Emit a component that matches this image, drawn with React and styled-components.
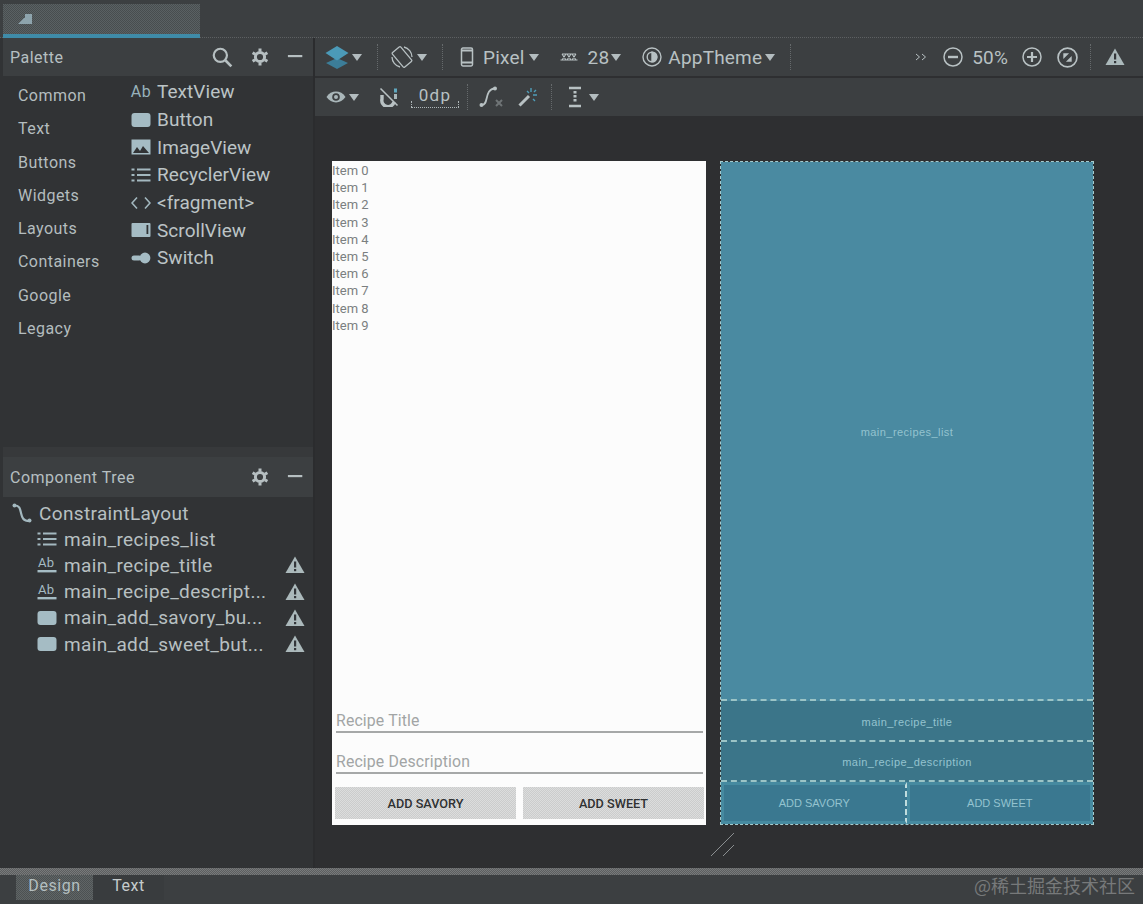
import React from "react";
import styled, { createGlobalStyle, css } from "styled-components";

const GlobalStyle = createGlobalStyle`
  html, body {
    margin: 0;
    height: 100%;
    background: #2e2f31;
    font-family: Roboto, "Noto Sans CJK SC", sans-serif;
    overflow: hidden;
  }
  * { box-sizing: border-box; }
`;

const dither = (a, b) => css`
  background: repeating-conic-gradient(${a} 0 25%, ${b} 0 50%) 0 0 / 2px 2px;
`;

const Ide = styled.div`
  position: relative;
  width: 1143px;
  height: 904px;
  display: flex;
  flex-direction: column;
  background: #2e2f31;
  color: #bcc4c6;
`;

const TabStrip = styled.div`
  height: 38px;
  flex: none;
  padding: 4px 0 0 3px;
  background: #3c3f41;
  border-bottom: 1px dotted #5d6062;
`;

const FileTab = styled.div`
  width: 197px;
  height: 34px;
  padding: 7px 0 0 14px;
  ${dither("#484d4f", "#5a6163")}
  border-bottom: 4px solid #3f8ba8;
`;

const Main = styled.div`
  flex: 1;
  min-height: 0;
  display: flex;
`;

const Sidebar = styled.div`
  width: 315px;
  flex: none;
  padding-left: 3px;
  display: flex;
  flex-direction: column;
  background: #313335;
  border-right: 2px solid #2b2c2e;
`;

const PanelHeader = styled.div`
  height: ${(p) => p.$height}px;
  flex: none;
  display: flex;
  align-items: center;
  padding: 0 8px 0 7px;
  background: #3c3f41;
  font-size: 16px;
  letter-spacing: 0.5px;
  color: #b6bfc1;
`;

const PanelTitle = styled.div`
  flex: 1;
`;

const HeaderIcons = styled.div`
  display: flex;
  align-items: center;
  gap: 17px;
`;

const PaletteBody = styled.div`
  height: 371px;
  flex: none;
  display: flex;
  padding: 3px 0 0 15px;
`;

const Categories = styled.div`
  width: 113px;
  flex: none;
`;

const Category = styled.div`
  height: 33.3px;
  line-height: 33px;
  font-size: 16px;
  letter-spacing: 0.45px;
  color: #b4bdbf;
`;

const Widgets = styled.div`
  display: flex;
  flex-direction: column;
  margin-top: -1px;
`;

const WidgetRow = styled.div`
  height: 27.7px;
  display: flex;
  align-items: center;
  gap: 6px;
  font-size: 19px;
  letter-spacing: 0.05px;
  color: #bcc4c6;
`;

const IconSlot = styled.span`
  width: 20px;
  height: 20px;
  flex: none;
  display: flex;
  align-items: center;
  justify-content: center;
  color: #a3b8bf;
`;

const AbMark = styled.span`
  font-size: 16px;
  line-height: 1;
  letter-spacing: 0.6px;
  color: #98b2bb;
`;

const PanelGap = styled.div`
  height: 10px;
  flex: none;
  background: #37393b;
`;

const TreeBody = styled.div`
  flex: 1;
  padding: 3px 8px 0 9px;
`;

const TreeRow = styled.div`
  height: 26.2px;
  display: flex;
  align-items: center;
  gap: 7px;
  padding-left: ${(p) => (p.$root ? 0 : 25)}px;
  font-size: 19px;
  letter-spacing: 0.35px;
  color: #b8c0c2;
`;

const TreeLabel = styled.span`
  flex: 1;
  white-space: nowrap;
`;

const Workspace = styled.div`
  flex: 1;
  min-width: 0;
  display: flex;
  flex-direction: column;
`;

const ToolRow = styled.div`
  height: 38px;
  flex: none;
  display: flex;
  align-items: center;
  background: #3c3f41;
  margin-bottom: ${(p) => p.$gap || 0}px;
  font-size: 19px;
  letter-spacing: 0.2px;
  color: #b8c1c3;
`;

const Tool = styled.div`
  display: flex;
  align-items: center;
  gap: ${(p) => p.$gap ?? 3}px;
  margin-left: ${(p) => p.$ml || 0}px;
  margin-right: ${(p) => p.$mr || 0}px;
`;

const Separator = styled.div`
  width: 0;
  height: 26px;
  margin-left: ${(p) => p.$ml || 0}px;
  border-left: 1px dotted #666a6c;
`;

const Spacer = styled.div`
  flex: 1;
`;

const Caret = styled.span`
  width: 0;
  height: 0;
  flex: none;
  border-left: 5.5px solid transparent;
  border-right: 5.5px solid transparent;
  border-top: 7px solid #b3bcbf;
`;

const ZeroDp = styled.div`
  position: relative;
  width: 48px;
  height: 22px;
  margin: 0 0 0 12px;
  text-align: center;
  font-size: 17px;
  line-height: 18px;
  letter-spacing: 1.2px;
  border-bottom: 1px dotted #aeb6b8;

  &::before,
  &::after {
    content: "";
    position: absolute;
    bottom: 0;
    height: 6px;
    border-left: 1px dotted #aeb6b8;
  }
  &::before { left: 0; }
  &::after { right: 0; }
`;

const Canvas = styled.div`
  flex: 1;
  min-height: 0;
  display: flex;
  gap: 14px;
  padding: 45px 0 0 17px;
  background: #2e2f31;
`;

const Phone = styled.div`
  width: 374px;
  height: 664px;
  flex: none;
  display: flex;
  flex-direction: column;
  background: #fcfcfc;
`;

const ItemList = styled.div`
  flex: 1;
  padding-top: 1px;
`;

const ListItem = styled.div`
  height: 17.2px;
  line-height: 18px;
  font-size: 13px;
  color: #7b7f80;
`;

const EditField = styled.div`
  height: 41px;
  margin: 0 3px 0 4px;
  display: flex;
  align-items: flex-end;
  border-bottom: 2px solid #a6a8a8;
  font-size: 15.8px;
  line-height: 20px;
  letter-spacing: 0.15px;
  color: #a2a5a5;
`;

const PhoneActions = styled.div`
  height: 51px;
  flex: none;
  display: flex;
  gap: 7px;
  padding: 13px 2px 6px 3px;
`;

const PhoneButton = styled.div`
  flex: 1;
  display: flex;
  align-items: center;
  justify-content: center;
  ${dither("#cbcccc", "#dcdddd")}
  font-size: 12.7px;
  font-weight: 500;
  color: #2f3132;
`;

const Blueprint = styled.div`
  position: relative;
  width: 374px;
  height: 664px;
  flex: none;
  display: flex;
  flex-direction: column;
  border: 1px dashed #a5ccce;
  font-family: "Liberation Sans", sans-serif;
  font-size: 11px;
  letter-spacing: 0.45px;
  color: #94c3cf;
`;

const BlueBlock = styled.div`
  height: ${(p) => (p.$height ? `${p.$height}px` : "auto")};
  flex: ${(p) => (p.$height ? "none" : 1)};
  display: flex;
  align-items: center;
  justify-content: center;
  padding-top: 2px;
  background: ${(p) => p.$bg};
  border-bottom: ${(p) => (p.$line ? "2px dashed #9cc4c6" : "none")};
`;

const BlueActions = styled.div`
  height: 42px;
  flex: none;
  display: flex;
`;

const BlueButton = styled.div`
  flex: 1;
  display: flex;
  align-items: center;
  justify-content: center;
  background: #3a7890;
  border: 3px solid #468aa0;
  border-right: ${(p) => (p.$first ? "2px dashed #c0dcdd" : "3px solid #468aa0")};
  letter-spacing: 0;
`;

const ResizeMark = styled.svg`
  position: absolute;
  left: -11px;
  top: 670px;
`;

const BottomBar = styled.div`
  height: 36px;
  flex: none;
  background: #3c3f41;
  display: flex;
  flex-direction: column;
  font-size: 16px;
  letter-spacing: 0.55px;
`;

const BottomRule = styled.div`
  height: 7px;
  flex: none;
  ${dither("#5c5e5f", "#787a7b")}
`;

const BottomTabs = styled.div`
  display: flex;
  padding-left: 16px;
`;

const BottomTab = styled.div`
  width: ${(p) => p.$width}px;
  height: 25px;
  display: flex;
  align-items: center;
  justify-content: center;
  padding-bottom: 5px;
  color: ${(p) => (p.$active ? "#b4bfc0" : "#c6cccd")};
  ${(p) => (p.$active ? dither("#4c5152", "#606566") : "background: #393c3e;")}
`;

const Watermark = styled.div`
  position: absolute;
  right: 8px;
  bottom: 7px;
  font-size: 18px;
  line-height: 24px;
  color: #77797a;
  font-family: "Noto Sans CJK SC", sans-serif;
`;

const Svg = ({ size = 20, children, ...rest }) => (
  <svg width={size} height={size} viewBox="0 0 20 20" fill="none" stroke="currentColor" strokeWidth="1.6" {...rest}>
    {children}
  </svg>
);

const FileIcon = () => (
  <Svg size={16} stroke="none" viewBox="0 0 16 16">
    <path d="M1 13l6-6h1V3h7v10z" fill="#8ea4ad" />
  </Svg>
);

const SearchIcon = () => (
  <Svg size={22}>
    <circle cx="8.5" cy="8.5" r="6" strokeWidth="2" />
    <path d="M13 13l5.5 5.5" strokeWidth="2.4" />
  </Svg>
);

const GearIcon = () => (
  <Svg size={20}>
    <circle cx="10" cy="10" r="4.6" strokeWidth="3" />
    <path d="M10 1.5v3M10 15.5v3M2.6 5.7l2.6 1.5M14.8 12.8l2.6 1.5M2.6 14.3l2.6-1.5M14.8 7.2l2.6-1.5" strokeWidth="3" />
  </Svg>
);

const MinusIcon = () => (
  <Svg size={18}>
    <path d="M1 9h16" strokeWidth="2.4" />
  </Svg>
);

const ButtonIcon = () => (
  <Svg size={20}>
    <rect x="0.5" y="3" width="19" height="14" rx="3" fill="#a5bcc4" stroke="none" />
  </Svg>
);

const ImageIcon = () => (
  <Svg size={20}>
    <rect x="0.5" y="2.5" width="19" height="15" fill="#a5bcc4" stroke="none" />
    <path d="M2 16l4-6 3 4 3-5 6 7z" fill="#313335" stroke="none" />
  </Svg>
);

const ListIcon = () => (
  <Svg size={20}>
    <path d="M0.5 4.5h3M0.5 10h3M0.5 15.5h3M6 4.5h13.5M6 10h13.5M6 15.5h13.5" strokeWidth="2.2" />
  </Svg>
);

const CodeIcon = () => (
  <Svg size={20}>
    <path d="M6 4.5L1 10l5 5.5M14 4.5l5 5.5-5 5.5" />
  </Svg>
);

const ScrollIcon = () => (
  <Svg size={20}>
    <rect x="0.5" y="3" width="19" height="14" rx="1" fill="#a5bcc4" stroke="none" />
    <rect x="15.5" y="5" width="1.8" height="9" fill="#313335" stroke="none" />
  </Svg>
);

const SwitchIcon = () => (
  <Svg size={20}>
    <rect x="0.5" y="7.5" width="10" height="5" rx="2.5" fill="#a5bcc4" stroke="none" />
    <circle cx="14" cy="10" r="5.4" fill="#a5bcc4" stroke="none" />
  </Svg>
);

const ConstraintIcon = () => (
  <Svg size={20}>
    <circle cx="2.5" cy="2.5" r="2" fill="currentColor" stroke="none" />
    <circle cx="17.5" cy="17.5" r="2" fill="currentColor" stroke="none" />
    <path d="M2.5 2.5c5 0 5.5 3 6.5 7.5s2 8 8.5 8" strokeWidth="2.2" />
  </Svg>
);

const TextUnderlineIcon = () => (
  <Svg size={20} stroke="none">
    <text x="1" y="12" fontSize="13" fill="#a5bcc4" stroke="none" fontFamily="Roboto, sans-serif">Ab</text>
    <rect x="0.5" y="15" width="19" height="2.4" fill="#a5bcc4" />
  </Svg>
);

const WarningIcon = () => (
  <Svg size={20} stroke="none">
    <path d="M10 1.5L19.5 18H0.5z" fill="#abb9bb" />
    <rect x="9" y="6.5" width="2.2" height="6" fill="#33363a" />
    <rect x="9" y="14" width="2.2" height="2.2" fill="#33363a" />
  </Svg>
);

const LayersIcon = () => (
  <Svg size={24} stroke="none" viewBox="0 0 24 24">
    <path d="M12 13L1 18l11 6 11-6z" fill="#3c7d98" />
    <path d="M12 1L0.5 8 12 15.5 23.5 8z" fill="#4b9ab8" />
  </Svg>
);

const RotateIcon = () => (
  <Svg size={24} viewBox="0 0 24 24" strokeWidth="1.3">
    <rect x="6.5" y="2.5" width="11" height="19" rx="1.2" transform="rotate(-40 12 12)" />
    <path d="M2 12a10.5 10.5 0 0 0 8 10M22 12a10.5 10.5 0 0 0-8-10" />
  </Svg>
);

const PhoneIcon = () => (
  <Svg size={20} strokeWidth="1.5">
    <rect x="4.5" y="1" width="11" height="18" rx="1.4" />
    <path d="M4.5 3.5h11M4.5 15.5h11" strokeWidth="2" />
  </Svg>
);

const ApiIcon = () => (
  <Svg size={20} strokeWidth="1.1">
    <path d="M3 7h14M1.5 13h17M3 7l4 6M7 7l-4 6M8 7l4 6M12 7l-4 6M13 7l4 6M17 7l-4 6" />
  </Svg>
);

const ThemeIcon = () => (
  <Svg size={20} strokeWidth="1.4">
    <circle cx="10" cy="10" r="9" />
    <circle cx="10" cy="10" r="4.8" />
    <path d="M10 5.2a4.8 4.8 0 0 1 0 9.6z" fill="currentColor" />
  </Svg>
);

const ChevronsIcon = () => (
  <Svg size={12} viewBox="0 0 12 12" strokeWidth="1">
    <path d="M1 3l3.5 3L1 9M7 3l3.5 3L7 9" />
  </Svg>
);

const ZoomOutIcon = () => (
  <Svg size={20} strokeWidth="1.5">
    <circle cx="10" cy="10" r="9" />
    <path d="M5 10h10" strokeWidth="2.4" />
  </Svg>
);

const ZoomInIcon = () => (
  <Svg size={20} strokeWidth="1.5">
    <circle cx="10" cy="10" r="9" />
    <path d="M5 10h10M10 5v10" strokeWidth="2.2" />
  </Svg>
);

const FitIcon = () => (
  <Svg size={21} strokeWidth="1.6">
    <circle cx="10" cy="10" r="9" />
    <path d="M6 6h5.5L6 11.5zM14 14H8.5L14 8.5z" fill="currentColor" stroke="none" />
  </Svg>
);

const EyeIcon = () => (
  <Svg size={20} strokeWidth="1.8">
    <path d="M0.5 10C5 2.8 15 2.8 19.5 10 15 17.2 5 17.2 0.5 10z" fill="#a9b6b9" stroke="none" />
    <circle cx="10" cy="10" r="3.8" fill="#3c3f41" stroke="none" />
    <circle cx="10" cy="10" r="2" fill="#a9b6b9" stroke="none" />
  </Svg>
);

const MagnetIcon = () => (
  <Svg size={20} strokeWidth="2">
    <path d="M3 8v4a6 6 0 0 0 12 3" strokeWidth="3.4" />
    <path d="M1.5 1.5l17 17" strokeWidth="1.6" />
    <rect x="15" y="1.5" width="3" height="4" fill="#5fa8bf" stroke="none" />
    <rect x="15" y="7" width="3" height="5" fill="#a9b6b9" stroke="none" />
  </Svg>
);

const PathIcon = () => (
  <Svg size={24} viewBox="0 0 24 24" strokeWidth="1.8">
    <circle cx="2.5" cy="20" r="2" fill="currentColor" stroke="none" />
    <circle cx="16" cy="3.5" r="2" fill="currentColor" stroke="none" />
    <path d="M3 20c7 0 2-16 13-16.5" />
    <path d="M17 15l6 6M23 15l-6 6" stroke="#6f7476" strokeWidth="2" />
  </Svg>
);

const WandIcon = () => (
  <Svg size={20} strokeWidth="3">
    <path d="M1.5 18.5L11 9" />
    <path d="M13 1v4M9 4l2 2M16 5l2-2M15 8h4M15 12l2 2" stroke="#4f9db8" strokeWidth="1.4" />
  </Svg>
);

const MarginIcon = () => (
  <Svg width={12} height={22} viewBox="0 0 12 22" strokeWidth="2.4">
    <path d="M0 2h12M0 20h12" />
    <path d="M6 5v12" strokeDasharray="2.5 1.5" strokeWidth="3" />
  </Svg>
);

const paletteCategories = ["Common", "Text", "Buttons", "Widgets", "Layouts", "Containers", "Google", "Legacy"];

const paletteWidgets = [
  { label: "TextView", icon: <AbMark>Ab</AbMark> },
  { label: "Button", icon: <ButtonIcon /> },
  { label: "ImageView", icon: <ImageIcon /> },
  { label: "RecyclerView", icon: <ListIcon /> },
  { label: "<fragment>", icon: <CodeIcon /> },
  { label: "ScrollView", icon: <ScrollIcon /> },
  { label: "Switch", icon: <SwitchIcon /> },
];

const treeRows = [
  { label: "main_recipes_list", icon: <ListIcon /> },
  { label: "main_recipe_title", icon: <TextUnderlineIcon />, warn: true },
  { label: "main_recipe_descript...", icon: <TextUnderlineIcon />, warn: true },
  { label: "main_add_savory_bu...", icon: <ButtonIcon />, warn: true },
  { label: "main_add_sweet_but...", icon: <ButtonIcon />, warn: true },
];

const items = Array.from({ length: 10 }, (_, i) => `Item ${i}`);

export default function App() {
  return (
    <Ide>
      <GlobalStyle />
      <TabStrip>
        <FileTab>
          <FileIcon />
        </FileTab>
      </TabStrip>
      <Main>
        <Sidebar>
          <PanelHeader $height={38}>
            <PanelTitle>Palette</PanelTitle>
            <HeaderIcons>
              <SearchIcon />
              <GearIcon />
              <MinusIcon />
            </HeaderIcons>
          </PanelHeader>
          <PaletteBody>
            <Categories>
              {paletteCategories.map((name) => (
                <Category key={name}>{name}</Category>
              ))}
            </Categories>
            <Widgets>
              {paletteWidgets.map((w) => (
                <WidgetRow key={w.label}>
                  <IconSlot>{w.icon}</IconSlot>
                  {w.label}
                </WidgetRow>
              ))}
            </Widgets>
          </PaletteBody>
          <PanelGap />
          <PanelHeader $height={40}>
            <PanelTitle>Component Tree</PanelTitle>
            <HeaderIcons>
              <GearIcon />
              <MinusIcon />
            </HeaderIcons>
          </PanelHeader>
          <TreeBody>
            <TreeRow $root>
              <IconSlot>
                <ConstraintIcon />
              </IconSlot>
              <TreeLabel>ConstraintLayout</TreeLabel>
            </TreeRow>
            {treeRows.map((row) => (
              <TreeRow key={row.label}>
                <IconSlot>{row.icon}</IconSlot>
                <TreeLabel>{row.label}</TreeLabel>
                {row.warn && <WarningIcon />}
              </TreeRow>
            ))}
          </TreeBody>
        </Sidebar>
        <Workspace>
          <ToolRow $gap={2}>
            <Tool $ml={10}>
              <LayersIcon />
              <Caret />
            </Tool>
            <Separator $ml={15} />
            <Tool $ml={12}>
              <RotateIcon />
              <Caret />
            </Tool>
            <Separator $ml={15} />
            <Tool $ml={14} $gap={6}>
              <PhoneIcon />
              <Tool $gap={4}>
                Pixel
                <Caret />
              </Tool>
            </Tool>
            <Tool $ml={20} $gap={9}>
              <ApiIcon />
              <Tool $gap={2}>
                28
                <Caret />
              </Tool>
            </Tool>
            <Tool $ml={21} $gap={6}>
              <ThemeIcon />
              <Tool $gap={3}>
                AppTheme
                <Caret />
              </Tool>
            </Tool>
            <Separator $ml={15} />
            <Spacer />
            <Tool>
              <ChevronsIcon />
            </Tool>
            <Tool $ml={16}>
              <ZoomOutIcon />
            </Tool>
            <Tool $ml={9}>50%</Tool>
            <Tool $ml={14}>
              <ZoomInIcon />
            </Tool>
            <Tool $ml={15}>
              <FitIcon />
            </Tool>
            <Separator $ml={12} />
            <Tool $ml={14} $mr={18}>
              <WarningIcon />
            </Tool>
          </ToolRow>
          <ToolRow>
            <Tool $ml={11}>
              <EyeIcon />
              <Caret />
            </Tool>
            <Tool $ml={20}>
              <MagnetIcon />
            </Tool>
            <ZeroDp>0dp</ZeroDp>
            <Separator $ml={8} />
            <Tool $ml={11}>
              <PathIcon />
            </Tool>
            <Tool $ml={15}>
              <WandIcon />
            </Tool>
            <Separator $ml={13} />
            <Tool $ml={17} $gap={8}>
              <MarginIcon />
              <Caret />
            </Tool>
          </ToolRow>
          <Canvas>
            <Phone>
              <ItemList>
                {items.map((item) => (
                  <ListItem key={item}>{item}</ListItem>
                ))}
              </ItemList>
              <EditField>Recipe Title</EditField>
              <EditField>Recipe Description</EditField>
              <PhoneActions>
                <PhoneButton>ADD SAVORY</PhoneButton>
                <PhoneButton>ADD SWEET</PhoneButton>
              </PhoneActions>
            </Phone>
            <Blueprint>
              <BlueBlock $bg="#4a8aa1" $line>main_recipes_list</BlueBlock>
              <BlueBlock $bg="#3b7589" $height={41} $line>main_recipe_title</BlueBlock>
              <BlueBlock $bg="#3b7589" $height={40} $line>main_recipe_description</BlueBlock>
              <BlueActions>
                <BlueButton $first>ADD SAVORY</BlueButton>
                <BlueButton>ADD SWEET</BlueButton>
              </BlueActions>
              <ResizeMark width="26" height="26" viewBox="0 0 26 26" fill="none" stroke="#8a8e90" strokeWidth="1">
                <path d="M1 24L24 1M13 24l11-11" />
              </ResizeMark>
            </Blueprint>
          </Canvas>
        </Workspace>
      </Main>
      <BottomBar>
        <BottomRule />
        <BottomTabs>
          <BottomTab $active $width={77}>Design</BottomTab>
          <BottomTab $width={71}>Text</BottomTab>
        </BottomTabs>
      </BottomBar>
      <Watermark>@稀土掘金技术社区</Watermark>
    </Ide>
  );
}
